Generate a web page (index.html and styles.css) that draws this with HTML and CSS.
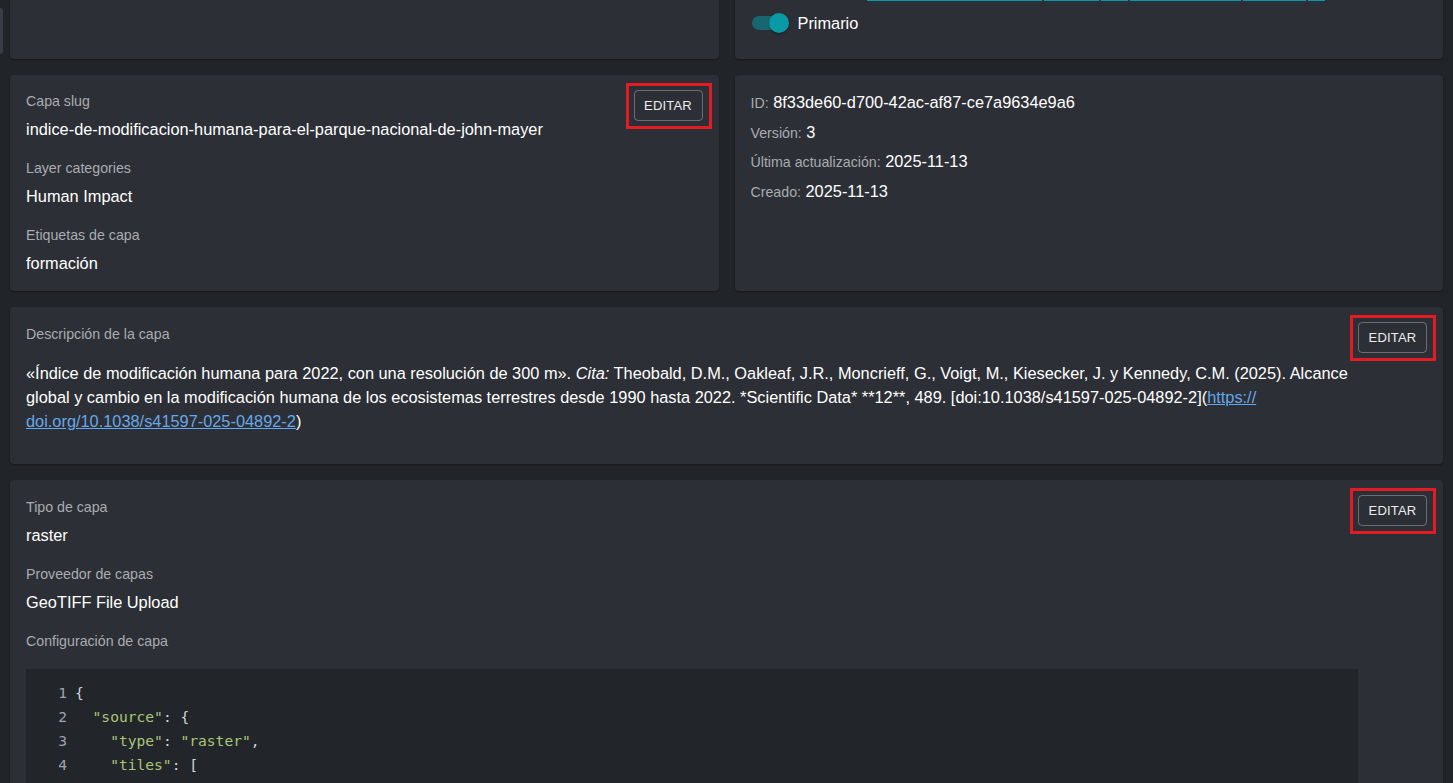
FILE: index.html
```html
<!DOCTYPE html>
<html lang="es">
<head>
<meta charset="utf-8">
<title>Capa</title>
<link rel="stylesheet" href="styles.css">
</head>
<body>
<div class="edge-tab"></div>
<main class="page">
  <div class="grid2 top-row">
    <section class="card"></section>
    <section class="card card-top">
      <div class="link-row">
        <span class="ul" style="width:175px"></span><span class="ul" style="width:55px"></span><span class="ul" style="width:27px"></span><span class="ul" style="width:111px"></span><span class="ul" style="width:63px"></span><span class="ul" style="width:17px"></span>
      </div>
      <label class="switch-row">
        <span class="switch"><span class="track"></span><span class="thumb"></span></span>
        <span class="switch-label">Primario</span>
      </label>
    </section>
  </div>

  <div class="grid2">
    <section class="card card-split">
      <div class="content">
        <div class="field">
          <div class="label">Capa slug</div>
          <div class="value">indice-de-modificacion-humana-para-el-parque-nacional-de-john-mayer</div>
        </div>
        <div class="field">
          <div class="label">Layer categories</div>
          <div class="value">Human Impact</div>
        </div>
        <div class="field">
          <div class="label">Etiquetas de capa</div>
          <div class="value">formación</div>
        </div>
      </div>
      <div class="action"><button class="btn marked">Editar</button></div>
    </section>
    <section class="card meta">
      <p class="meta-line"><span class="meta-key">ID:</span> 8f33de60-d700-42ac-af87-ce7a9634e9a6</p>
      <p class="meta-line"><span class="meta-key">Versión:</span> 3</p>
      <p class="meta-line"><span class="meta-key">Última actualización:</span> 2025-11-13</p>
      <p class="meta-line"><span class="meta-key">Creado:</span> 2025-11-13</p>
    </section>
  </div>

  <section class="card card-split card-loose">
    <div class="content">
      <div class="label">Descripción de la capa</div>
      <p class="desc">«Índice de modificación humana para 2022, con una resolución de 300 m». <em>Cita:</em> Theobald, D.M., Oakleaf, J.R., Moncrieff, G., Voigt, M., Kiesecker, J. y Kennedy, C.M. (2025). Alcance global y cambio en la modificación humana de los ecosistemas terrestres desde 1990 hasta 2022. *Scientific Data* **12**, 489. [doi:10.1038/s41597-025-04892-2](<a href="#">https://<wbr>doi.org/10.1038/s41597-025-04892-2</a>)</p>
    </div>
    <div class="action"><button class="btn marked">Editar</button></div>
  </section>

  <section class="card card-split card-loose">
    <div class="content">
      <div class="field">
        <div class="label">Tipo de capa</div>
        <div class="value">raster</div>
      </div>
      <div class="field">
        <div class="label">Proveedor de capas</div>
        <div class="value">GeoTIFF File Upload</div>
      </div>
      <div class="label config-label">Configuración de capa</div>
      <div class="code">
        <div class="code-line"><span class="ln">1</span><span class="src"><span class="p">{</span></span></div>
        <div class="code-line"><span class="ln">2</span><span class="src">  <span class="s">"source"</span><span class="p">: {</span></span></div>
        <div class="code-line"><span class="ln">3</span><span class="src">    <span class="s">"type"</span><span class="p">: </span><span class="s">"raster"</span><span class="p">,</span></span></div>
        <div class="code-line"><span class="ln">4</span><span class="src">    <span class="s">"tiles"</span><span class="p">: [</span></span></div>
        <div class="code-line"><span class="ln">5</span><span class="src">      <span class="s">"https://tiles.example.org/{z}/{x}/{y}.png"</span></span></div>
        <div class="code-line"><span class="ln">6</span><span class="src"><span class="p">    ],</span></span></div>
      </div>
    </div>
    <div class="action"><button class="btn marked">Editar</button></div>
  </section>
</main>
</body>
</html>
```
FILE: styles.css
```css
* { box-sizing: border-box; }

html, body {
  margin: 0;
  padding: 0;
  overflow: hidden;
  background: #212428;
}

body {
  font-family: "Liberation Sans", Arial, sans-serif;
  color: #ffffff;
  position: relative;
}

.edge-tab {
  position: absolute;
  left: 0;
  top: 8px;
  width: 3px;
  height: 46px;
  background: #3a3d43;
  border-radius: 0 3px 3px 0;
}

.page {
  display: flex;
  flex-direction: column;
  gap: 16px;
  padding: 0 10px;
  margin-top: -30px;
}

.grid2 {
  display: grid;
  grid-template-columns: 1fr 1fr;
  gap: 16px;
}

.card {
  background: #2c2f35;
  border-radius: 4px;
  box-shadow: 0 1px 2px rgba(0, 0, 0, 0.35);
  padding: 16px;
}

/* top row */
.card-top {
  padding-bottom: 17px;
}

.link-row {
  display: flex;
  height: 15px;
  margin-left: 116px;
  gap: 2px;
}

.ul {
  display: block;
  height: 15px;
  border-bottom: 1px solid #0a9aa6;
}

.switch-row {
  display: flex;
  align-items: center;
  margin-top: 3px;
  margin-left: -11px;
}

.switch {
  position: relative;
  display: inline-block;
  width: 58px;
  height: 38px;
  padding: 12px;
  flex-shrink: 0;
}

.track {
  display: block;
  width: 34px;
  height: 14px;
  border-radius: 7px;
  background: #176670;
}

.thumb {
  position: absolute;
  top: 9px;
  left: 29px;
  width: 20px;
  height: 20px;
  border-radius: 50%;
  background: #0a9aa6;
  box-shadow: 0 2px 1px -1px rgba(0,0,0,0.2), 0 1px 1px rgba(0,0,0,0.14), 0 1px 3px rgba(0,0,0,0.12);
}

.switch-label {
  font-size: 16.35px;
  line-height: 24px;
}

/* split cards */
.card-split {
  display: flex;
  align-items: flex-start;
}

.card-loose {
  padding-top: 17px;
}

.content {
  flex: 1;
  min-width: 0;
}

.action {
  flex-shrink: 0;
  margin-top: -1px;
}

.card-loose .action {
  margin-top: -2px;
}

.field + .field {
  margin-top: 17px;
}

.label {
  font-size: 14.2px;
  line-height: 20px;
  color: #a9acb1;
}

.value {
  margin-top: 6px;
  font-size: 16.35px;
  line-height: 24px;
  color: #ffffff;
}

.btn {
  position: relative;
  display: block;
  width: 69px;
  height: 31px;
  padding: 0;
  font-family: "Liberation Sans", Arial, sans-serif;
  font-size: 13px;
  letter-spacing: 0.2px;
  text-transform: uppercase;
  color: #ececec;
  background: transparent;
  border: 1px solid rgba(255, 255, 255, 0.3);
  border-radius: 4px;
}

.marked::after {
  content: "";
  position: absolute;
  top: -8px;
  bottom: -9px;
  left: -9px;
  right: -10px;
  border: 3px solid #e31b23;
  pointer-events: none;
}

/* meta */
.meta {
  padding-top: 15px;
  display: flex;
  flex-direction: column;
  gap: 5.7px;
}

.meta-line {
  margin: 0;
  font-size: 16.35px;
  line-height: 24px;
  color: #ffffff;
}

.meta-key {
  font-size: 14.2px;
  line-height: 1;
  color: #a9acb1;
}

/* description */
.desc {
  margin: 17px 0 15px;
  font-size: 16.35px;
  line-height: 24px;
  color: #ffffff;
}

.desc a {
  color: #66a8ea;
  text-decoration: underline;
}

/* config */
.config-label {
  margin-top: 17px;
}

.code {
  margin-top: 18px;
  background: #222529;
  padding: 12px 0;
  font-family: "DejaVu Sans Mono", "Liberation Mono", monospace;
  font-size: 14.6px;
  line-height: 24px;
}

.code-line {
  display: flex;
}

.ln {
  width: 41px;
  text-align: right;
  color: #9ea4ae;
  flex-shrink: 0;
}

.src {
  padding-left: 8px;
  white-space: pre;
  color: #d4d7dd;
}

.s { color: #a9c77a; }
.p { color: #d4d7dd; }
```
